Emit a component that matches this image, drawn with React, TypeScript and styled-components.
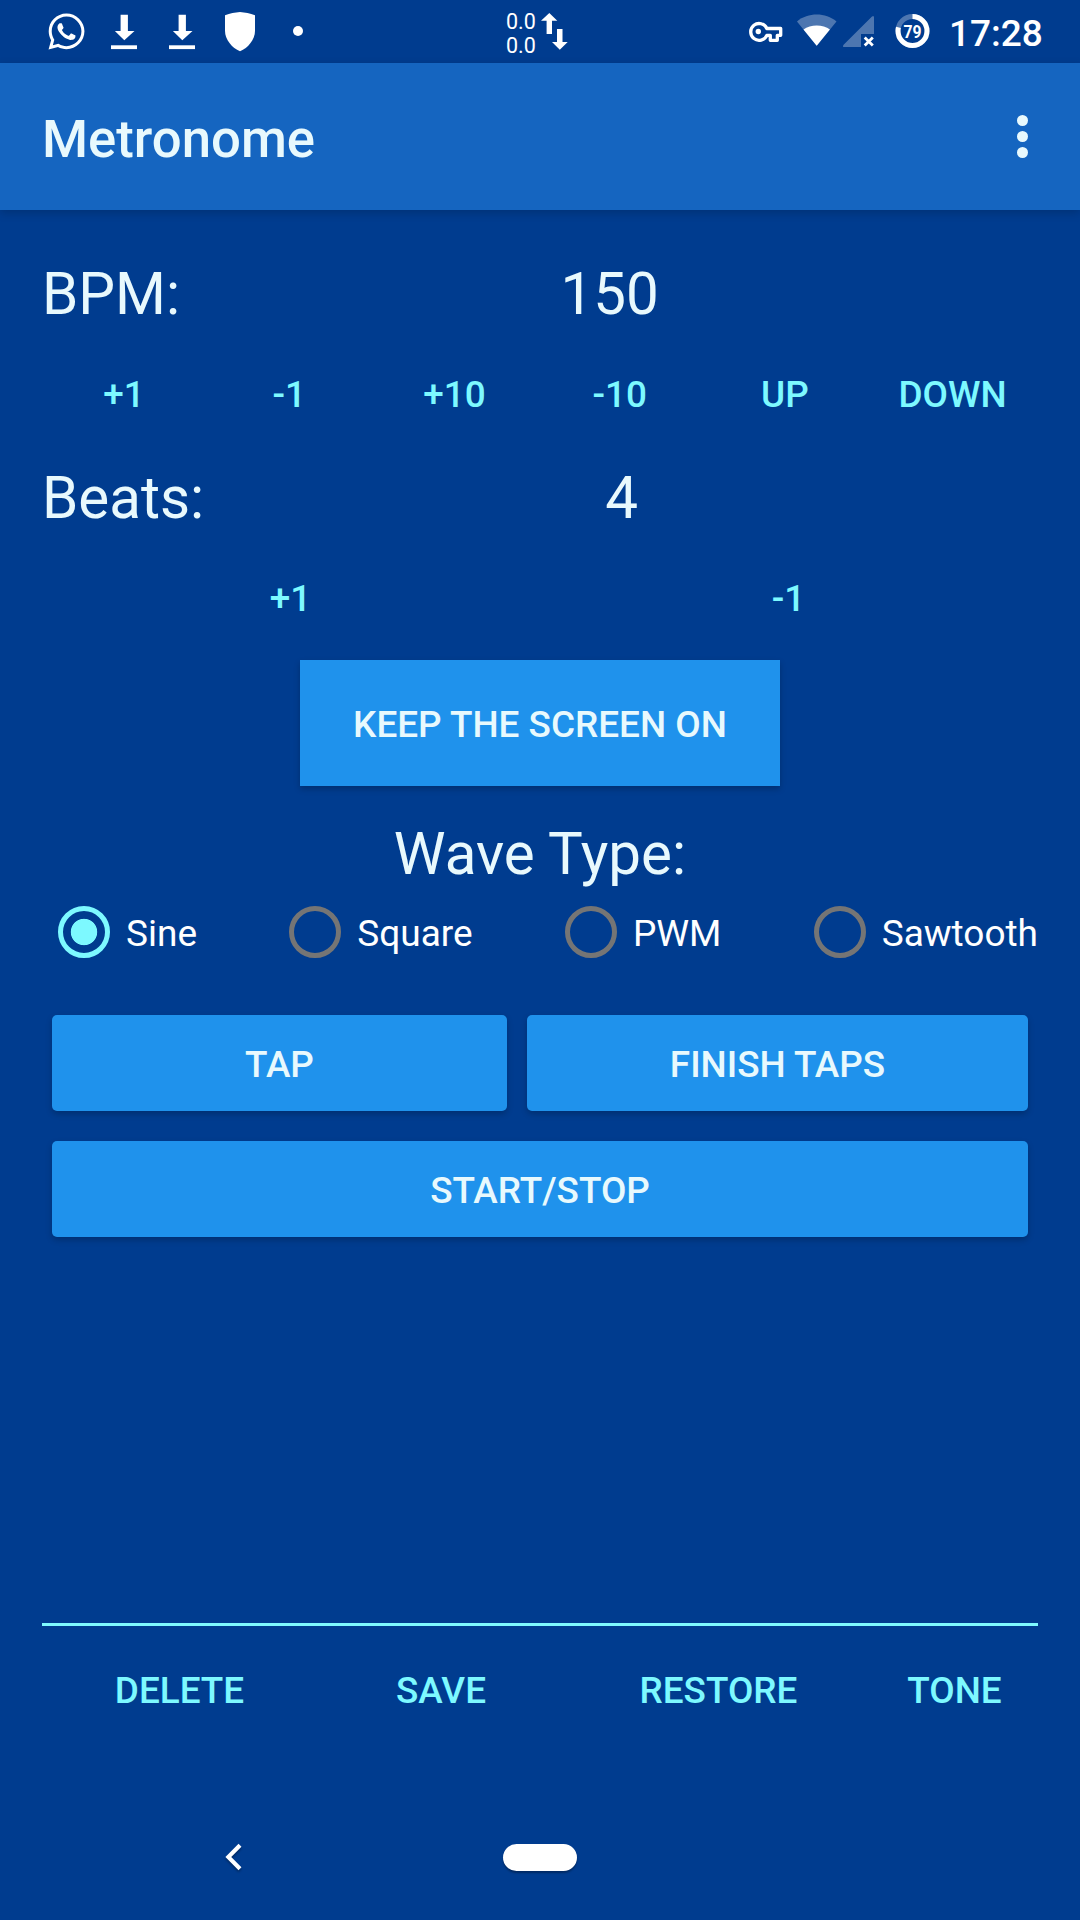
import React, { useState } from "react";
import styled, { createGlobalStyle } from "styled-components";
import { FaWhatsapp } from "react-icons/fa";

const color = {
  background: "#003c8f",
  bar: "#1565c0",
  button: "#1f92ec",
  text: "#e8f9fd",
  accent: "#7df9ff",
  idle: "#757575",
};

const GlobalStyle = createGlobalStyle`
  * { box-sizing: border-box; }
  body {
    margin: 0;
    background: ${color.background};
    font-family: Roboto, "Noto Sans", sans-serif;
  }
  button { font-family: inherit; border: 0; padding: 0; margin: 0; }
`;

const Screen = styled.div`
  width: 1080px;
  height: 1920px;
  display: flex;
  flex-direction: column;
  overflow: hidden;
  background: ${color.background};
  color: ${color.text};
`;

const StatusBar = styled.header`
  height: 63px;
  flex: none;
  display: flex;
  align-items: flex-start;
  padding-left: 48px;
  color: #fff;
`;

const StatusItem = styled.div<{ $gap?: number; $width: number }>`
  flex: none;
  width: ${(p) => p.$width}px;
  height: 63px;
  margin-left: ${(p) => p.$gap ?? 0}px;
  svg { display: block; }
`;

const ChatIcon = styled(FaWhatsapp)`
  width: 41px;
  height: 41px;
  margin: 11px 0 0 -2.5px;
`;

const Rates = styled.div`
  display: flex;
  flex-direction: column;
  padding-top: 10px;
  font-size: 21.5px;
  line-height: 24px;
`;

const Clock = styled.time`
  display: block;
  font-size: 37px;
  font-weight: 500;
  line-height: 43px;
  padding-top: 12px;
  white-space: nowrap;
`;

const AppBar = styled.div`
  height: 147px;
  flex: none;
  display: flex;
  align-items: center;
  justify-content: space-between;
  padding: 0 52px 0 42px;
  background: ${color.bar};
  box-shadow: 0 3px 9px rgba(0, 0, 0, 0.18);
`;

const Title = styled.h1`
  margin: 0;
  padding-top: 5px;
  font-size: 52.7px;
  line-height: 62px;
  font-weight: 500;
`;

const MenuButton = styled.button`
  display: flex;
  flex-direction: column;
  gap: 5px;
  background: none;
`;

const MenuDot = styled.span`
  width: 11px;
  height: 11px;
  border-radius: 50%;
  background: ${color.text};
`;

const Content = styled.main`
  flex: 1;
  display: flex;
  flex-direction: column;
  padding: 42px 42px 0;
`;

const Reading = styled.div`
  display: flex;
  height: 78px;
  font-size: 58.3px;
  line-height: 84px;
`;

const Value = styled.output`
  flex: 1;
  padding-left: 1px;
  text-align: center;
`;

const ButtonRow = styled.div<{ $columns: string }>`
  display: grid;
  grid-template-columns: ${(p) => p.$columns};
  height: 126px;
  padding-top: 3px;
`;

const TextButton = styled.button`
  background: none;
  color: ${color.accent};
  font-size: 36.9px;
  line-height: 44px;
  font-weight: 500;
  padding-right: 1px;
  white-space: nowrap;
`;

const RaisedButton = styled.button<{ $width?: number; $height: number; $radius: number }>`
  width: ${(p) => (p.$width ? `${p.$width}px` : "100%")};
  height: ${(p) => p.$height}px;
  border-radius: ${(p) => p.$radius}px;
  background: ${color.button};
  color: ${color.text};
  font-size: 36.9px;
  line-height: 44px;
  font-weight: 500;
  padding-top: 4px;
  box-shadow: 0 3px 6px rgba(0, 0, 0, 0.22);
`;

const KeepOn = styled(RaisedButton)`
  align-self: center;
`;

const GroupTitle = styled.h2`
  margin: 29px 0 0;
  font-size: 58.3px;
  line-height: 78px;
  font-weight: 400;
  text-align: center;
`;

const RadioGroup = styled.div`
  display: flex;
  justify-content: space-between;
  height: 84px;
  margin-top: -3px;
`;

const RadioLabel = styled.label`
  display: flex;
  align-items: center;
  color: #fff;
  font-size: 37px;
  line-height: 44px;
`;

const RadioInput = styled.input`
  appearance: none;
  flex: none;
  width: 52px;
  height: 52px;
  margin: 0 16px;
  border: 5px solid ${color.idle};
  border-radius: 50%;
  &:checked {
    border-color: ${color.accent};
    background: radial-gradient(circle, ${color.accent} 12.8px, transparent 13.6px);
  }
`;

const RadioText = styled.span`
  padding-top: 4px;
`;

const Actions = styled.div`
  display: grid;
  grid-template-columns: 455px 501px;
  gap: 30px 20px;
  margin: 41px 10px 0;
`;

const WideCell = styled.div`
  grid-column: 1 / -1;
`;

const Divider = styled.hr`
  width: 100%;
  height: 3px;
  margin: auto 0 0;
  border: 0;
  background: ${color.accent};
`;

const Footer = styled(ButtonRow)`
  height: 168px;
  padding: 0 0 38px;
`;

const NavBar = styled.nav`
  flex: none;
  height: 126px;
  display: flex;
  align-items: center;
  padding-left: 222px;
  svg { display: block; filter: drop-shadow(0 2px 1px rgba(0, 0, 0, 0.3)); }
`;

const HomePill = styled.span`
  width: 74px;
  height: 27px;
  margin-left: 257px;
  border-radius: 14px;
  background: #fff;
  box-shadow: 0 2px 2px rgba(0, 0, 0, 0.3);
`;

const DownloadIcon = () => (
  <svg width="26" height="63" viewBox="0 0 26 63" fill="#fff">
    <path d="M9.6 14.7h7.3v16.2h6.6L13.3 40.3 3.9 30.9h5.7z" />
    <path d="M0 45.3h26v3.8H0z" />
  </svg>
);

const ShieldIcon = () => (
  <svg width="30" height="63" viewBox="0 0 30 63" fill="#fff">
    <path d="M15 12C20 12.3 25 13.5 30 15.2V31C30 39.5 23 48 15 51.2C7 48 0 39.5 0 31V15.2C5 13.5 10 12.3 15 12Z" />
  </svg>
);

const TransferIcon = () => (
  <svg width="27" height="63" viewBox="541 0 27 63" fill="#fff">
    <path d="M549.3 13l8 7.8H552V34h-5.4V20.8H541z" />
    <path d="M557 29h5.5v13h5.2l-7.9 7.8L552 42h5z" />
  </svg>
);

const KeyIcon = () => (
  <svg width="36" height="63" viewBox="748 0 36 63">
    <path
      d="M766.8 28.5H780.7V35.3H777.3V40.3H770.3V35.3H766.8A8.4 8.4 0 1 1 766.8 28.5Z"
      fill="none"
      stroke="#fff"
      strokeWidth="3.3"
      strokeLinejoin="round"
    />
    <circle cx="758.3" cy="31.5" r="2.7" fill="#fff" />
  </svg>
);

const WifiIcon = () => (
  <svg width="40" height="63" viewBox="797 0 40 63" fill="#fff">
    <path opacity=".3" d="M816.7 45.7 796.9 21.5C808 12.3 825.5 12.3 836.5 21.5Z" />
    <path d="M816.7 45.7 803.5 29.6C810.5 24.2 823 24.2 829.9 29.6Z" />
  </svg>
);

const SignalIcon = () => (
  <svg width="32" height="63" viewBox="843 0 32 63">
    <path opacity=".3" fill="#fff" d="M844.5 47H861V34H874V17.5Q874 15 872 16.5L843.6 44.8Q842 47 844.5 47Z" />
    <path d="M864.7 37.5 872.8 45.6M872.8 37.5 864.7 45.6" stroke="#fff" strokeWidth="2.8" />
  </svg>
);

const BatteryIcon = () => (
  <svg width="35" height="63" viewBox="0 0 35 63">
    <circle cx="17.5" cy="31" r="14.5" fill="none" stroke="#fff" strokeOpacity=".3" strokeWidth="5" />
    <circle
      cx="17.5"
      cy="31"
      r="14.5"
      fill="none"
      stroke="#fff"
      strokeWidth="5"
      pathLength={100}
      strokeDasharray="79 100"
      transform="rotate(-90 17.5 31)"
    />
    <text
      x="17.5"
      y="38"
      textAnchor="middle"
      fill="#fff"
      fontSize="18.5"
      fontWeight="700"
      textLength="18"
      lengthAdjust="spacingAndGlyphs"
    >
      79
    </text>
  </svg>
);

const BackIcon = () => (
  <svg width="24" height="34" viewBox="222 1840 24 34">
    <path d="M240 1845.2 228.3 1857 240 1868.8" fill="none" stroke="#fff" strokeWidth="4.1" />
  </svg>
);

const waves = ["Sine", "Square", "PWM", "Sawtooth"];

export default function App() {
  const [bpm, setBpm] = useState(150);
  const [beats, setBeats] = useState(4);
  const [wave, setWave] = useState("Sine");

  return (
    <>
      <GlobalStyle />
      <Screen>
        <StatusBar>
          <StatusItem $width={36}><ChatIcon /></StatusItem>
          <StatusItem $width={26} $gap={27.3}><DownloadIcon /></StatusItem>
          <StatusItem $width={26} $gap={32}><DownloadIcon /></StatusItem>
          <StatusItem $width={30} $gap={29.7}><ShieldIcon /></StatusItem>
          <StatusItem $width={10} $gap={38}>
            <svg width="10" height="63"><circle cx="5" cy="31" r="5" fill="#fff" /></svg>
          </StatusItem>
          <StatusItem $width={30} $gap={203}>
            <Rates><span>0.0</span><span>0.0</span></Rates>
          </StatusItem>
          <StatusItem $width={27} $gap={5}><TransferIcon /></StatusItem>
          <StatusItem $width={36} $gap={180}><KeyIcon /></StatusItem>
          <StatusItem $width={40} $gap={13}><WifiIcon /></StatusItem>
          <StatusItem $width={32} $gap={6}><SignalIcon /></StatusItem>
          <StatusItem $width={35} $gap={20}><BatteryIcon /></StatusItem>
          <StatusItem $width={92} $gap={19}><Clock>17:28</Clock></StatusItem>
        </StatusBar>

        <AppBar>
          <Title>Metronome</Title>
          <MenuButton aria-label="More options"><MenuDot /><MenuDot /><MenuDot /></MenuButton>
        </AppBar>

        <Content>
          <Reading><span>BPM:</span><Value>{bpm}</Value></Reading>
          <ButtonRow $columns="repeat(5, 1fr) 170px">
            <TextButton onClick={() => setBpm(bpm + 1)}>+1</TextButton>
            <TextButton onClick={() => setBpm(bpm - 1)}>-1</TextButton>
            <TextButton onClick={() => setBpm(bpm + 10)}>+10</TextButton>
            <TextButton onClick={() => setBpm(bpm - 10)}>-10</TextButton>
            <TextButton>UP</TextButton>
            <TextButton>DOWN</TextButton>
          </ButtonRow>
          <Reading><span>Beats:</span><Value>{beats}</Value></Reading>
          <ButtonRow $columns="1fr 1fr">
            <TextButton onClick={() => setBeats(beats + 1)}>+1</TextButton>
            <TextButton onClick={() => setBeats(beats - 1)}>-1</TextButton>
          </ButtonRow>
          <KeepOn $width={480} $height={126} $radius={0}>KEEP THE SCREEN ON</KeepOn>
          <GroupTitle>Wave Type:</GroupTitle>
          <RadioGroup>
            {waves.map((name) => (
              <RadioLabel key={name}>
                <RadioInput type="radio" name="wave" checked={wave === name} onChange={() => setWave(name)} />
                <RadioText>{name}</RadioText>
              </RadioLabel>
            ))}
          </RadioGroup>
          <Actions>
            <RaisedButton $height={96} $radius={5}>TAP</RaisedButton>
            <RaisedButton $height={96} $radius={5}>FINISH TAPS</RaisedButton>
            <WideCell><RaisedButton $height={96} $radius={5}>START/STOP</RaisedButton></WideCell>
          </Actions>
          <Divider />
          <Footer $columns="276px 247px 308px 164px">
            <TextButton>DELETE</TextButton>
            <TextButton>SAVE</TextButton>
            <TextButton>RESTORE</TextButton>
            <TextButton>TONE</TextButton>
          </Footer>
        </Content>

        <NavBar><BackIcon /><HomePill /></NavBar>
      </Screen>
    </>
  );
}
